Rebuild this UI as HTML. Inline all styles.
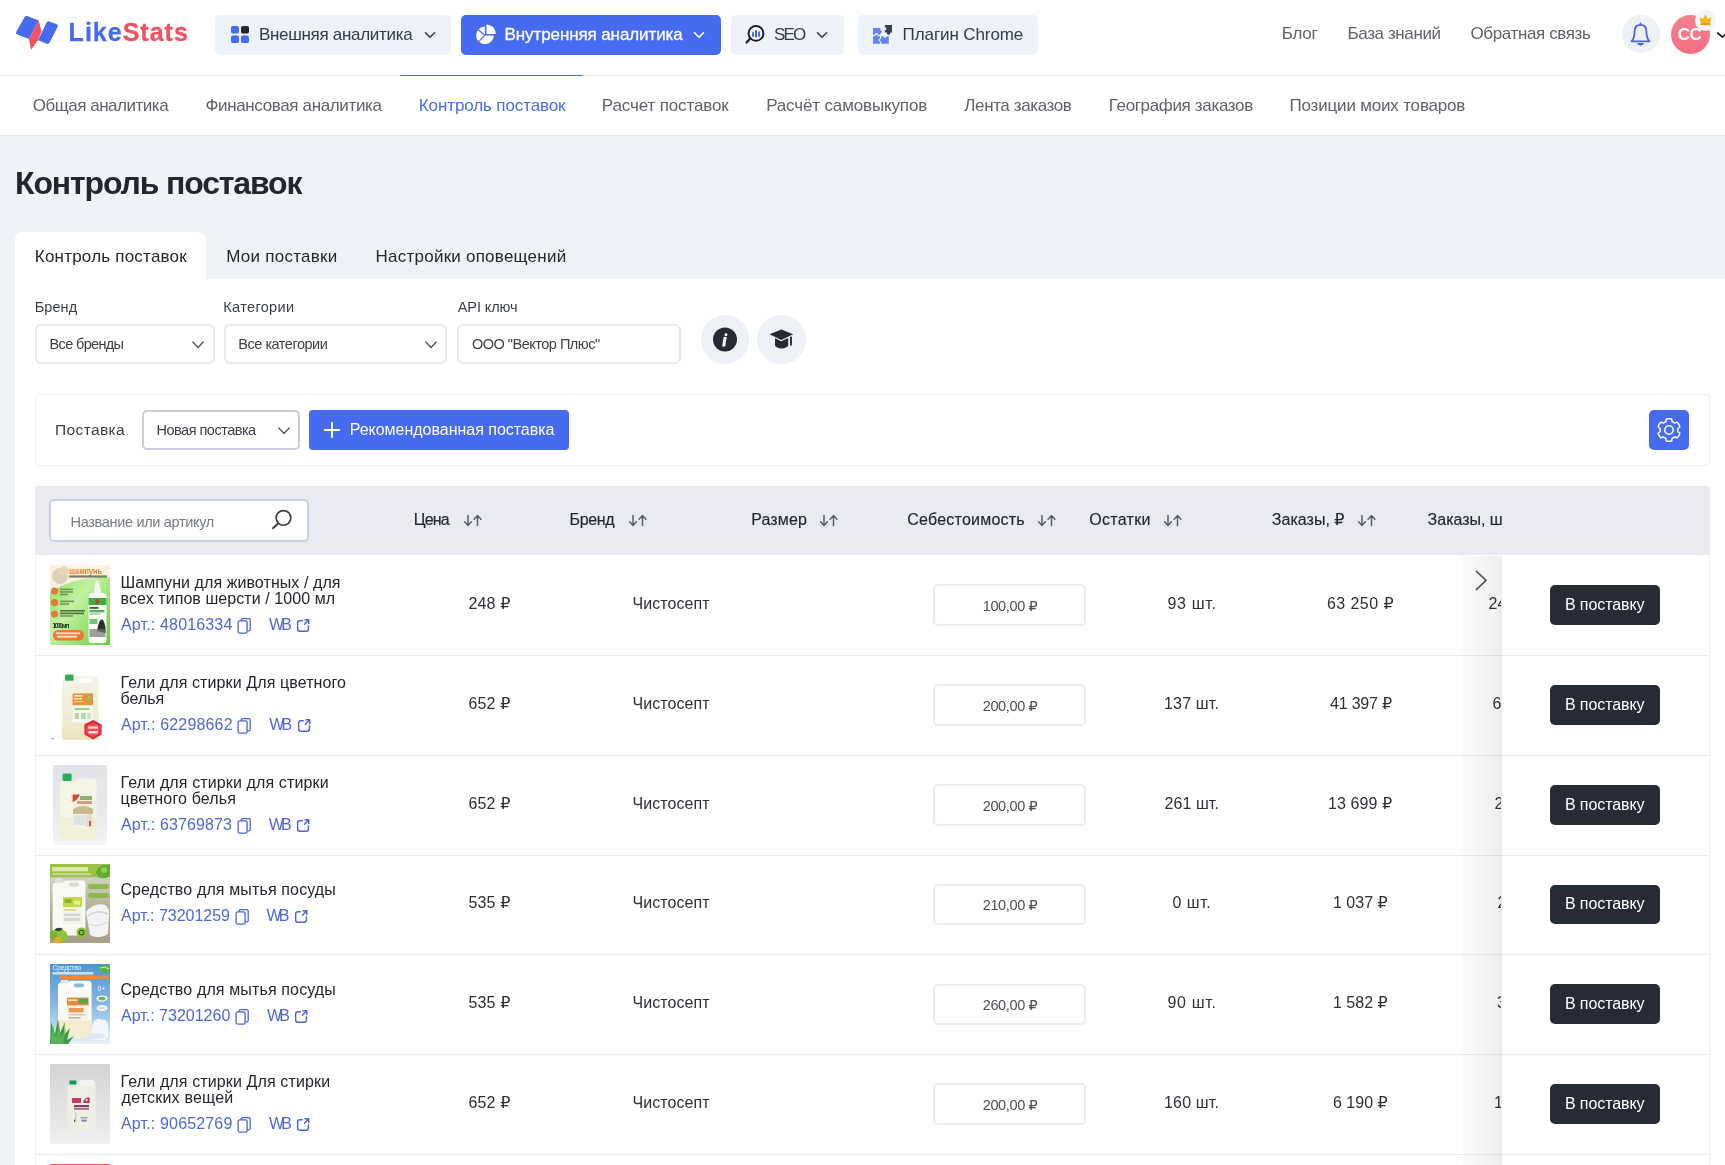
<!DOCTYPE html>
<html lang="ru">
<head>
<meta charset="utf-8">
<title>Контроль поставок — LikeStats</title>
<style>
*{box-sizing:border-box;margin:0;padding:0}
html,body{width:1725px;height:1165px;overflow:hidden}
body{position:relative;background:#f0f3f6;font-family:"Liberation Sans","DejaVu Sans",sans-serif;color:#23262f;font-size:16px}
.abs{position:absolute;white-space:nowrap}
/* header */
#hdr{position:absolute;left:0;top:0;width:1725px;height:76px;background:#fff;border-bottom:1px solid #e3e6eb}
.logo-t{left:69px;top:16px;font-size:27px;font-weight:700;line-height:34px;letter-spacing:0.2px}
.logo-t .a{color:#476bf0}.logo-t .b{color:#ef4f5f}
.nbtn{position:absolute;top:15px;height:40px;border-radius:5px;background:#eef2f9;color:#343a46;font-size:16px;line-height:40px;white-space:nowrap}
.nbtn.act{background:#476bf0;color:#fff}
.nbtn span{position:absolute;top:-1px}
.nbtn svg{position:absolute}
.hl{top:24px;font-size:16px;line-height:20px;color:#5c6068}
/* subnav */
#sub{position:absolute;left:0;top:76px;width:1725px;height:60px;background:#fff;border-bottom:1px solid #e3e6eb}
.sl{top:95px;font-size:16px;line-height:20px;color:#5c6068}
.sl.act{color:#476bf0}
#ind{position:absolute;left:400px;top:75px;width:183px;height:1px;background:#476bf0}
h1{position:absolute;left:15px;top:164px;font-size:30px;line-height:38px;font-weight:700;color:#23262f;white-space:nowrap;letter-spacing:0.2px}
/* tabs */
#tab1{position:absolute;left:15px;top:232px;width:191px;height:48px;background:#fff;border-radius:8px 8px 0 0}
.tb{top:246px;font-size:16px;line-height:20px;color:#23262f}
#panel{position:absolute;left:15px;top:279px;width:1710px;height:900px;background:#fff}
.lbl{top:298px;font-size:14px;line-height:18px;color:#3b3f49}
.sel{position:absolute;top:324px;height:40px;border:2px solid #e9e9ec;border-radius:6px;background:#fff}
.circ{position:absolute;top:315.2px;width:48.4px;height:48.4px;border-radius:50%;background:#eef1f6}
#sbar{position:absolute;left:35px;top:394px;width:1675px;height:72px;border:1px solid #eff0f2;border-radius:4px;background:#fff}
/* table */
#thead{position:absolute;left:35px;top:486px;width:1675px;height:70px;background:#e9ebf0;border-radius:4px 4px 0 0}
.th{top:510px;font-size:15px;line-height:20px;color:#23262f}
#tbody{position:absolute;left:35px;top:555px;width:1675px;height:620px;border-left:1px solid #eff0f2;border-right:1px solid #eff0f2;background:#fff}
.row{position:absolute;left:36px;width:1673px;height:100px;border-bottom:1px solid #eceef1}
.c{position:absolute;white-space:nowrap;font-size:15px;line-height:20px;color:#2f333c}
.ttl{position:absolute;left:85px;font-size:15px;line-height:16px;color:#23262f;white-space:nowrap}
.art{position:absolute;left:85px;font-size:15px;line-height:20px;color:#4a68d8;white-space:nowrap}
.inp{position:absolute;left:897px;width:153px;height:42px;border:2px solid #ececee;border-radius:4px;font-size:14px;line-height:38px;color:#3b3f49;text-align:center;background:#fff}
.btn{position:absolute;left:1514px;width:110px;height:40px;border-radius:4px;background:#23262f;color:#fff;font-size:16px;line-height:38px;text-align:center}
.thumb{position:absolute;left:14px;width:60px;height:80px;overflow:hidden}
</style>
</head>
<body>
<!-- HEADER -->
<div id="hdr"></div>
<svg class="abs" style="left:12px;top:12px" width="52" height="42" viewBox="12 12 52 42">
  <path d="M24.4 17.2 Q25.3 15.5 27.1 16.1 L38.8 20.4 L28.9 39 L17.2 34.6 Q15.3 33.8 16.2 32 Z" fill="#476bf0"/>
  <path d="M38.8 20.4 L41.4 31.6 L38 40.2 L31 49.8 L28.9 39 Z" fill="#ef5261"/>
  <path d="M46.6 22.6 Q47.5 20.9 49.3 21.5 L56.8 24.2 Q58.6 25 57.7 26.8 L49.5 42.8 Q48.6 44.4 46.8 43.8 L38 40.3 Z" fill="#476bf0"/>
</svg>
<!-- nav buttons -->
<div class="nbtn" style="left:215px;width:236px"></div>
<div class="nbtn act" style="left:461px;width:260px"></div>
<div class="nbtn" style="left:731px;width:113px"></div>
<div class="nbtn" style="left:858px;width:180px"></div>
<svg class="abs" style="left:231px;top:26px" width="18" height="17" viewBox="0 0 18 17">
  <rect x="0" y="0" width="8" height="7.6" rx="1.8" fill="#476bf0"/>
  <rect x="10" y="0" width="8" height="7.6" rx="1.8" fill="#23262f"/>
  <rect x="0" y="9.4" width="8" height="7.6" rx="1.8" fill="#476bf0"/>
  <rect x="10" y="9.4" width="8" height="7.6" rx="1.8" fill="#476bf0"/>
</svg>
<svg class="abs" style="left:424px;top:31px" width="12" height="8" viewBox="0 0 12 8"><path d="M1.5 1.8 L6 6.2 L10.5 1.8" fill="none" stroke="#343a46" stroke-width="1.6" stroke-linecap="round" stroke-linejoin="round"/></svg>
<!-- pie icon -->
<svg class="abs" style="left:474px;top:23px" width="24" height="24" viewBox="474 23 24 24">
  <path d="M484.9 26.6 A8.8 8.8 0 1 0 493.7 35.4 L484.9 35.4 Z" fill="#fff"/>
  <path d="M486.5 24.6 A9.4 9.4 0 0 1 495.9 34 L486.5 34 Z" fill="#fff"/>
  <path d="M484.9 35.4 L478.4 29.8 M484.9 35.4 L478.8 41.4" stroke="#476bf0" stroke-width="1.3" fill="none"/>
</svg>
<svg class="abs" style="left:693px;top:31px" width="12" height="8" viewBox="0 0 12 8"><path d="M1.5 1.8 L6 6.2 L10.5 1.8" fill="none" stroke="#fff" stroke-width="1.6" stroke-linecap="round" stroke-linejoin="round"/></svg>
<!-- seo icon -->
<svg class="abs" style="left:744px;top:23px" width="24" height="24" viewBox="744 23 24 24">
  <circle cx="756" cy="33.4" r="7.4" fill="#f6f9fd" stroke="#1d2029" stroke-width="2"/>
  <path d="M750.2 38.6 L746.6 42.6" stroke="#1d2029" stroke-width="2.2" stroke-linecap="round"/>
  <path d="M753 32.2 V36.8 M759.1 31.4 V36.8" stroke="#4f63ea" stroke-width="1.9" fill="none"/>
  <path d="M756.05 30.2 V37.3" stroke="#3f58c8" stroke-width="1.9" fill="none"/>
</svg>
<svg class="abs" style="left:816px;top:31px" width="12" height="8" viewBox="0 0 12 8"><path d="M1.5 1.8 L6 6.2 L10.5 1.8" fill="none" stroke="#343a46" stroke-width="1.6" stroke-linecap="round" stroke-linejoin="round"/></svg>
<!-- puzzle icon -->
<svg class="abs" style="left:871px;top:23px" width="24" height="24" viewBox="871 23 24 24">
  <path d="M873 28 H880.4 V30.3 A1.5 1.5 0 1 1 880.4 33.3 V34.7 H878.2 A1.7 1.7 0 0 0 874.8 34.7 H873 Z" fill="#6683f3"/>
  <path d="M873 36.2 H875 A1.7 1.7 0 0 1 878.2 36.2 H880 V38.6 A1.5 1.5 0 0 0 880 41.6 V43.8 H873 Z" fill="#6683f3"/>
  <path d="M881.3 36.3 H883.6 A1.5 1.5 0 0 0 886.6 36.3 H888.8 V43.8 H881.3 V41.6 A1.5 1.5 0 1 1 881.3 38.6 Z" fill="#6683f3"/>
  <path d="M884.8 25 H892 V32.6 H890.2 A1.7 1.7 0 1 1 887 32.6 H884.8 V30.4 A1.6 1.6 0 1 0 884.8 27.2 Z" fill="#3a3d4b"/>
</svg>
<!-- bell -->
<div class="abs" style="left:1621.5px;top:15px;width:38px;height:38.4px;border-radius:50%;background:#eef1f6"></div>
<svg class="abs" style="left:1628px;top:21px" width="26" height="28" viewBox="1628 21 26 28">
  <path d="M1640.5 24.9 C1636.4 24.9 1634.6 27.8 1634.6 31.4 C1634.6 36.4 1633.4 39 1631.6 41.4 H1649.4 C1647.6 39 1646.4 36.4 1646.4 31.4 C1646.4 27.8 1644.6 24.9 1640.5 24.9 Z" fill="none" stroke="#4a64e4" stroke-width="1.8" stroke-linejoin="round"/>
  <path d="M1640.5 23.4 V25" stroke="#4a64e4" stroke-width="1.8" stroke-linecap="round"/>
  <path d="M1636.8 43 H1644.2 Q1640.5 48.6 1636.8 43 Z" fill="#4a64e4"/>
</svg>
<!-- avatar -->
<div class="abs" style="left:1671px;top:14.8px;width:39px;height:39px;border-radius:50%;background:linear-gradient(180deg,#f97f8f,#f37081)"></div>
<div class="abs" style="left:1694.7px;top:9.6px;width:21px;height:21px;border-radius:50%;background:#f6f4f6"></div>
<svg class="abs" style="left:1699px;top:13px" width="14" height="14" viewBox="1699 13 14 14">
  <path d="M1700.6 22 L1700 17 L1703 19.2 L1705.5 14.2 L1708 19.2 L1711 17 L1710.4 22 Z" fill="#f5b70a"/>
  <rect x="1700.6" y="22.4" width="9.8" height="2.6" fill="#e39a12"/>
</svg>
<svg class="abs" style="left:1715px;top:30px" width="12" height="10" viewBox="1715 30 12 10"><path d="M1717.6 33 L1722.4 37 L1727.2 33" fill="none" stroke="#23262f" stroke-width="1.7" stroke-linecap="round" stroke-linejoin="round"/></svg>
<!-- SUBNAV -->
<div id="sub"></div>
<div id="ind"></div>
<!-- TABS + PANEL -->
<div id="tab1"></div>
<div id="panel"></div>
<!-- filters -->
<div class="sel" style="left:35.2px;width:179.6px"></div>
<div class="sel" style="left:224.2px;width:223.3px"></div>
<div class="sel" style="left:457.4px;width:223.2px"></div>
<svg class="abs" style="left:191.4px;top:339.8px" width="14" height="10" viewBox="0 0 14 10"><path d="M1.8 2 L7 7.4 L12.2 2" fill="none" stroke="#575a63" stroke-width="1.4" stroke-linecap="round" stroke-linejoin="round"/></svg>
<svg class="abs" style="left:424.4px;top:339.8px" width="14" height="10" viewBox="0 0 14 10"><path d="M1.8 2 L7 7.4 L12.2 2" fill="none" stroke="#575a63" stroke-width="1.4" stroke-linecap="round" stroke-linejoin="round"/></svg>
<div class="circ" style="left:700.5px"></div>
<div class="circ" style="left:757.4px"></div>
<!-- info icon -->
<svg class="abs" style="left:711px;top:325px" width="28" height="28" viewBox="711 325 28 28">
  <circle cx="725" cy="339.4" r="12" fill="#262a35"/>
  <circle cx="726" cy="334.8" r="1.45" fill="#fff"/>
  <path d="M723.7 337 H726.7 L725.2 346.4 H722.1 Z" fill="#fff"/>
</svg>
<!-- grad cap -->
<svg class="abs" style="left:767px;top:326px" width="30" height="26" viewBox="767 326 30 26">
  <path d="M781.3 329.4 L793.2 334.3 L781.3 339.9 L769.6 334.3 Z" fill="#262a35"/>
  <path d="M775 338.2 L781.3 341.3 L788.2 338 V345 Q788.2 346.4 786.8 347 Q781.6 350 776.4 347 Q775 346.4 775 345 Z" fill="#262a35"/>
  <rect x="790" y="336.4" width="1.9" height="9.2" rx="0.6" fill="#262a35"/>
</svg>
<!-- supply bar -->
<div id="sbar"></div>
<div class="abs" style="left:142px;top:410px;width:158px;height:40px;border:2px solid #c9cddd;border-radius:5px;background:#fff"></div>
<svg class="abs" style="left:277.2px;top:425.8px" width="14" height="10" viewBox="0 0 14 10"><path d="M1.8 2 L7 7.4 L12.2 2" fill="none" stroke="#575a63" stroke-width="1.4" stroke-linecap="round" stroke-linejoin="round"/></svg>
<div class="abs" style="left:309px;top:410px;width:260px;height:40px;border-radius:4px;background:#476bf0"></div>
<svg class="abs" style="left:323.8px;top:421.9px" width="16" height="16" viewBox="0 0 16 16"><path d="M8 0.9 V15.1 M0.9 8 H15.1" stroke="#fff" stroke-width="1.9" stroke-linecap="round"/></svg>
<div class="abs" style="left:1649px;top:410px;width:40px;height:40px;border-radius:5px;background:#476bf0"></div>
<svg class="abs" style="left:1656.1px;top:417px" width="26" height="26" viewBox="-13 -13 26 26">
  <g fill="none" stroke="#fff" stroke-width="1.5" stroke-linejoin="round">
  <circle r="4.2"/>
  <path d="M0.00 11.30 L-0.20 11.30 L-0.39 11.29 L-0.59 11.28 L-0.79 11.27 L-0.98 11.26 L-1.18 11.24 L-1.38 11.22 L-1.57 11.19 L-1.77 11.16 L-1.96 11.13 L-2.16 11.09 L-2.35 11.05 L-2.54 10.99 L-2.69 10.77 L-2.80 10.43 L-2.87 10.01 L-2.92 9.56 L-2.96 9.12 L-3.01 8.73 L-3.08 8.45 L-3.19 8.31 L-3.33 8.25 L-3.48 8.19 L-3.62 8.13 L-3.76 8.07 L-3.90 8.00 L-4.04 7.93 L-4.18 7.86 L-4.31 7.78 L-4.45 7.71 L-4.58 7.63 L-4.72 7.55 L-4.85 7.46 L-4.98 7.38 L-5.10 7.29 L-5.23 7.20 L-5.36 7.11 L-5.48 7.01 L-5.60 6.92 L-5.78 6.89 L-6.06 6.97 L-6.41 7.12 L-6.82 7.31 L-7.23 7.49 L-7.64 7.64 L-7.99 7.71 L-8.25 7.69 L-8.40 7.56 L-8.53 7.41 L-8.66 7.26 L-8.78 7.11 L-8.90 6.96 L-9.02 6.80 L-9.14 6.64 L-9.26 6.48 L-9.37 6.32 L-9.48 6.15 L-9.58 5.99 L-9.69 5.82 L-9.79 5.65 L-9.88 5.48 L-9.98 5.31 L-10.07 5.13 L-10.16 4.95 L-10.24 4.78 L-10.32 4.60 L-10.40 4.42 L-10.48 4.23 L-10.55 4.05 L-10.62 3.86 L-10.68 3.68 L-10.75 3.49 L-10.78 3.30 L-10.67 3.06 L-10.43 2.80 L-10.10 2.52 L-9.74 2.25 L-9.38 1.99 L-9.07 1.76 L-8.86 1.56 L-8.79 1.39 L-8.81 1.24 L-8.83 1.08 L-8.85 0.93 L-8.87 0.78 L-8.88 0.62 L-8.89 0.47 L-8.89 0.31 L-8.90 0.16 L-8.90 0.00 L-8.90 -0.16 L-8.89 -0.31 L-8.89 -0.47 L-8.88 -0.62 L-8.87 -0.78 L-8.85 -0.93 L-8.83 -1.08 L-8.81 -1.24 L-8.79 -1.39 L-8.86 -1.56 L-9.07 -1.76 L-9.38 -1.99 L-9.74 -2.25 L-10.10 -2.52 L-10.43 -2.80 L-10.67 -3.06 L-10.78 -3.30 L-10.75 -3.49 L-10.68 -3.68 L-10.62 -3.86 L-10.55 -4.05 L-10.48 -4.23 L-10.40 -4.42 L-10.32 -4.60 L-10.24 -4.78 L-10.16 -4.95 L-10.07 -5.13 L-9.98 -5.31 L-9.88 -5.48 L-9.79 -5.65 L-9.69 -5.82 L-9.58 -5.99 L-9.48 -6.15 L-9.37 -6.32 L-9.26 -6.48 L-9.14 -6.64 L-9.02 -6.80 L-8.90 -6.96 L-8.78 -7.11 L-8.66 -7.26 L-8.53 -7.41 L-8.40 -7.56 L-8.25 -7.69 L-7.99 -7.71 L-7.64 -7.64 L-7.23 -7.49 L-6.82 -7.31 L-6.41 -7.12 L-6.06 -6.97 L-5.78 -6.89 L-5.60 -6.92 L-5.48 -7.01 L-5.36 -7.11 L-5.23 -7.20 L-5.10 -7.29 L-4.98 -7.38 L-4.85 -7.46 L-4.72 -7.55 L-4.58 -7.63 L-4.45 -7.71 L-4.31 -7.78 L-4.18 -7.86 L-4.04 -7.93 L-3.90 -8.00 L-3.76 -8.07 L-3.62 -8.13 L-3.48 -8.19 L-3.33 -8.25 L-3.19 -8.31 L-3.08 -8.45 L-3.01 -8.73 L-2.96 -9.12 L-2.92 -9.56 L-2.87 -10.01 L-2.80 -10.43 L-2.69 -10.77 L-2.54 -10.99 L-2.35 -11.05 L-2.16 -11.09 L-1.96 -11.13 L-1.77 -11.16 L-1.57 -11.19 L-1.38 -11.22 L-1.18 -11.24 L-0.98 -11.26 L-0.79 -11.27 L-0.59 -11.28 L-0.39 -11.29 L-0.20 -11.30 L-0.00 -11.30 L0.20 -11.30 L0.39 -11.29 L0.59 -11.28 L0.79 -11.27 L0.98 -11.26 L1.18 -11.24 L1.38 -11.22 L1.57 -11.19 L1.77 -11.16 L1.96 -11.13 L2.16 -11.09 L2.35 -11.05 L2.54 -10.99 L2.69 -10.77 L2.80 -10.43 L2.87 -10.01 L2.92 -9.56 L2.96 -9.12 L3.01 -8.73 L3.08 -8.45 L3.19 -8.31 L3.33 -8.25 L3.48 -8.19 L3.62 -8.13 L3.76 -8.07 L3.90 -8.00 L4.04 -7.93 L4.18 -7.86 L4.31 -7.78 L4.45 -7.71 L4.58 -7.63 L4.72 -7.55 L4.85 -7.46 L4.98 -7.38 L5.10 -7.29 L5.23 -7.20 L5.36 -7.11 L5.48 -7.01 L5.60 -6.92 L5.78 -6.89 L6.06 -6.97 L6.41 -7.12 L6.82 -7.31 L7.23 -7.49 L7.64 -7.64 L7.99 -7.71 L8.25 -7.69 L8.40 -7.56 L8.53 -7.41 L8.66 -7.26 L8.78 -7.11 L8.90 -6.96 L9.02 -6.80 L9.14 -6.64 L9.26 -6.48 L9.37 -6.32 L9.48 -6.15 L9.58 -5.99 L9.69 -5.82 L9.79 -5.65 L9.88 -5.48 L9.98 -5.31 L10.07 -5.13 L10.16 -4.95 L10.24 -4.78 L10.32 -4.60 L10.40 -4.42 L10.48 -4.23 L10.55 -4.05 L10.62 -3.86 L10.68 -3.68 L10.75 -3.49 L10.78 -3.30 L10.67 -3.06 L10.43 -2.80 L10.10 -2.52 L9.74 -2.25 L9.38 -1.99 L9.07 -1.76 L8.86 -1.56 L8.79 -1.39 L8.81 -1.24 L8.83 -1.08 L8.85 -0.93 L8.87 -0.78 L8.88 -0.62 L8.89 -0.47 L8.89 -0.31 L8.90 -0.16 L8.90 -0.00 L8.90 0.16 L8.89 0.31 L8.89 0.47 L8.88 0.62 L8.87 0.78 L8.85 0.93 L8.83 1.08 L8.81 1.24 L8.79 1.39 L8.86 1.56 L9.07 1.76 L9.38 1.99 L9.74 2.25 L10.10 2.52 L10.43 2.80 L10.67 3.06 L10.78 3.30 L10.75 3.49 L10.68 3.68 L10.62 3.86 L10.55 4.05 L10.48 4.23 L10.40 4.42 L10.32 4.60 L10.24 4.78 L10.16 4.95 L10.07 5.13 L9.98 5.31 L9.88 5.48 L9.79 5.65 L9.69 5.82 L9.58 5.99 L9.48 6.15 L9.37 6.32 L9.26 6.48 L9.14 6.64 L9.02 6.80 L8.90 6.96 L8.78 7.11 L8.66 7.26 L8.53 7.41 L8.40 7.56 L8.25 7.69 L7.99 7.71 L7.64 7.64 L7.23 7.49 L6.82 7.31 L6.41 7.12 L6.06 6.97 L5.78 6.89 L5.60 6.92 L5.48 7.01 L5.36 7.11 L5.23 7.20 L5.10 7.29 L4.98 7.38 L4.85 7.46 L4.72 7.55 L4.58 7.63 L4.45 7.71 L4.31 7.78 L4.18 7.86 L4.04 7.93 L3.90 8.00 L3.76 8.07 L3.62 8.13 L3.48 8.19 L3.33 8.25 L3.19 8.31 L3.08 8.45 L3.01 8.73 L2.96 9.12 L2.92 9.56 L2.87 10.01 L2.80 10.43 L2.69 10.77 L2.54 10.99 L2.35 11.05 L2.16 11.09 L1.96 11.13 L1.77 11.16 L1.57 11.19 L1.38 11.22 L1.18 11.24 L0.98 11.26 L0.79 11.27 L0.59 11.28 L0.39 11.29 L0.20 11.30 Z"/>
  </g>
</svg>
<!-- table head -->
<div id="thead"></div>
<div class="abs" style="left:49.3px;top:499px;width:259.6px;height:42.8px;border:2px solid #cbd0e0;border-radius:5px;background:#fff"></div>
<svg class="abs" style="left:270px;top:508px" width="24" height="24" viewBox="0 0 24 24">
  <circle cx="13.5" cy="9.9" r="7.35" fill="none" stroke="#3d4047" stroke-width="1.7"/>
  <path d="M8.3 15.2 L3 20.2" stroke="#3d4047" stroke-width="1.9" stroke-linecap="round"/>
</svg>
<div id="tbody"></div>

<!-- ROWS -->
<div class="abs" style="left:36px;top:655px;width:1673px;height:1px;background:#ececee"></div>
<div class="abs" style="left:36px;top:755px;width:1673px;height:1px;background:#ececee"></div>
<div class="abs" style="left:36px;top:855px;width:1673px;height:1px;background:#ececee"></div>
<div class="abs" style="left:36px;top:954px;width:1673px;height:1px;background:#ececee"></div>
<div class="abs" style="left:36px;top:1054px;width:1673px;height:1px;background:#ececee"></div>
<div class="abs" style="left:36px;top:1154px;width:1673px;height:1px;background:#ececee"></div>
<svg class="abs" style="left:463.1px;top:513px" width="22" height="15" viewBox="0 0 22 15"><g fill="none" stroke="#5a5e69" stroke-width="1.5" stroke-linecap="round" stroke-linejoin="round"><path d="M5 2.6 V12.2 M1.6 8.8 L5 12.4 L8.4 8.8"/><path d="M14.5 12.4 V2.8 M11.1 6.2 L14.5 2.6 L17.9 6.2"/></g></svg>
<svg class="abs" style="left:628.0px;top:513px" width="22" height="15" viewBox="0 0 22 15"><g fill="none" stroke="#5a5e69" stroke-width="1.5" stroke-linecap="round" stroke-linejoin="round"><path d="M5 2.6 V12.2 M1.6 8.8 L5 12.4 L8.4 8.8"/><path d="M14.5 12.4 V2.8 M11.1 6.2 L14.5 2.6 L17.9 6.2"/></g></svg>
<svg class="abs" style="left:819.0px;top:513px" width="22" height="15" viewBox="0 0 22 15"><g fill="none" stroke="#5a5e69" stroke-width="1.5" stroke-linecap="round" stroke-linejoin="round"><path d="M5 2.6 V12.2 M1.6 8.8 L5 12.4 L8.4 8.8"/><path d="M14.5 12.4 V2.8 M11.1 6.2 L14.5 2.6 L17.9 6.2"/></g></svg>
<svg class="abs" style="left:1037.0px;top:513px" width="22" height="15" viewBox="0 0 22 15"><g fill="none" stroke="#5a5e69" stroke-width="1.5" stroke-linecap="round" stroke-linejoin="round"><path d="M5 2.6 V12.2 M1.6 8.8 L5 12.4 L8.4 8.8"/><path d="M14.5 12.4 V2.8 M11.1 6.2 L14.5 2.6 L17.9 6.2"/></g></svg>
<svg class="abs" style="left:1163.0px;top:513px" width="22" height="15" viewBox="0 0 22 15"><g fill="none" stroke="#5a5e69" stroke-width="1.5" stroke-linecap="round" stroke-linejoin="round"><path d="M5 2.6 V12.2 M1.6 8.8 L5 12.4 L8.4 8.8"/><path d="M14.5 12.4 V2.8 M11.1 6.2 L14.5 2.6 L17.9 6.2"/></g></svg>
<svg class="abs" style="left:1357.0px;top:513px" width="22" height="15" viewBox="0 0 22 15"><g fill="none" stroke="#5a5e69" stroke-width="1.5" stroke-linecap="round" stroke-linejoin="round"><path d="M5 2.6 V12.2 M1.6 8.8 L5 12.4 L8.4 8.8"/><path d="M14.5 12.4 V2.8 M11.1 6.2 L14.5 2.6 L17.9 6.2"/></g></svg>
<svg class="abs" style="left:50px;top:565px" width="60" height="80" viewBox="0 0 60 80">
<defs><linearGradient id="g1" x1="0" y1="0" x2="1" y2="1"><stop offset="0" stop-color="#86d957"/><stop offset="0.45" stop-color="#c2f2a0"/><stop offset="1" stop-color="#68cb40"/></linearGradient></defs>
<rect width="60" height="80" fill="url(#g1)"/>
<path d="M0 0 H60 V12 Q40 12 22 17 Q8 21 0 28 Z" fill="#fbf3e2"/>
<ellipse cx="10" cy="11" rx="8" ry="8" fill="#d9c9b4" opacity="0.85"/><ellipse cx="14" cy="6" rx="5" ry="4.5" fill="#e9d7b5"/>
<text x="19" y="8.6" font-family="Liberation Sans,sans-serif" font-size="8.6" font-weight="700" fill="#e8862e" textLength="33" lengthAdjust="spacingAndGlyphs">шампунь</text>
<rect x="19" y="10.4" width="38" height="2.2" fill="#3d4a35" opacity="0.7"/>
<rect x="38.5" y="28" width="18" height="50" rx="3.5" fill="#fbfcfa"/><path d="M44 28 Q44.5 16 47 15 Q49.6 16 51 28 Z" fill="#f4f6f2"/>
<rect x="38.5" y="33" width="18" height="7" fill="#3fae45"/><rect x="45.6" y="34.4" width="3.4" height="4" fill="#c0392b"/>
<rect x="39.5" y="42" width="9" height="1.8" fill="#2f5a35"/><rect x="39.5" y="45" width="15" height="2.4" fill="#56b25a"/><rect x="39.5" y="48.4" width="11" height="1.2" fill="#8fbf92"/>
<rect x="39.5" y="54" width="8" height="5" fill="#56b25a" opacity="0.8"/><path d="M47 66 Q49 52 53 55 Q56 60 55.6 68 Z" fill="#2d302c"/><rect x="39.5" y="64" width="16" height="8" fill="#6f7a6d" opacity="0.7"/>
<circle cx="4.6" cy="26" r="3.6" fill="#e67a35"/><circle cx="4.6" cy="37.6" r="3.6" fill="#e67a35"/><circle cx="4.6" cy="49" r="3.6" fill="#e67a35"/>
<rect x="10" y="23.6" width="13" height="1.5" fill="#476b3a" opacity="0.7"/><rect x="10" y="26.2" width="13" height="1.5" fill="#476b3a" opacity="0.7"/><rect x="10" y="28.8" width="8" height="1.5" fill="#476b3a" opacity="0.7"/>
<rect x="10" y="35.6" width="14" height="1.5" fill="#476b3a" opacity="0.7"/><rect x="10" y="38.2" width="9" height="1.5" fill="#476b3a" opacity="0.7"/>
<rect x="10" y="45" width="25" height="1.6" fill="#33502b" opacity="0.8"/><rect x="10" y="47.6" width="24" height="1.6" fill="#33502b" opacity="0.8"/><rect x="10" y="50.2" width="13" height="1.5" fill="#476b3a" opacity="0.7"/>
<text x="2.4" y="62.6" font-family="Liberation Sans,sans-serif" font-size="6.6" font-weight="700" fill="#20301c" textLength="17">1000мл</text>
<rect x="3" y="65" width="31" height="10.6" rx="5" fill="#ec7a32"/><rect x="6" y="67.4" width="24" height="1.8" fill="#fbe3cf"/><rect x="7" y="70.8" width="20" height="1.8" fill="#fbe3cf"/>
</svg>
<svg class="abs" style="left:236.9px;top:616.8px" width="16" height="18" viewBox="0 0 16 18"><g fill="none" stroke="#4f63d8" stroke-width="1.3" stroke-linejoin="round"><rect x="1.1" y="3.9" width="9" height="12.2" rx="1.6"/><path d="M4.2 3.7 V3.2 Q4.2 1.7 5.7 1.7 H11.7 Q13.2 1.7 13.2 3.2 V12.4 Q13.2 13.9 11.9 13.9 H10.3"/></g></svg>
<svg class="abs" style="left:296.3px;top:618.2px" width="16" height="16" viewBox="0 0 16.6 16.6"><g fill="none" stroke="#4f63d8" stroke-width="1.5" stroke-linecap="round" stroke-linejoin="round"><path d="M6.6 2.9 H4 Q1.7 2.9 1.7 5.2 V11.4 Q1.7 13.7 4 13.7 H10.6 Q12.9 13.7 12.9 11.4 V8.2"/><path d="M9.4 1.9 H13.2 V5.7 M13 2.1 L8.8 6.4"/></g></svg>
<div class="abs" style="left:933.2px;top:584.2px;width:152.6px;height:41.4px;border:2px solid #ececee;border-radius:5px;background:#fff"></div>
<div class="abs" style="left:1550px;top:585px;width:110px;height:40px;border-radius:5px;background:#272b36"></div>
<svg class="abs" style="left:50px;top:665px" width="60" height="80" viewBox="0 0 60 80">
<rect width="60" height="80" fill="#fff"/>
<defs><linearGradient id="g2" x1="0" y1="0" x2="0" y2="1"><stop offset="0" stop-color="#f4f3e8"/><stop offset="0.6" stop-color="#f1ecd6"/><stop offset="1" stop-color="#ede3bf"/></linearGradient></defs>
<path d="M12 17 Q12 14 15 14 H24 L27 11.6 H45 Q48.6 11.6 48.6 15 V72 Q48.6 75 45.6 75 H15 Q12 75 12 72 Z" fill="url(#g2)"/>
<rect x="28" y="13" width="14" height="5" rx="2" fill="#fff" opacity="0.85"/>
<rect x="15" y="9.4" width="8.6" height="6.4" rx="1.2" fill="#2fb24e"/>
<rect x="22.6" y="28.4" width="20.4" height="12" fill="#ea8f3a"/><rect x="24" y="30" width="9" height="1.6" fill="#fbe6b8"/><rect x="24" y="33" width="8" height="1.6" fill="#fbe6b8"/><rect x="24" y="36" width="10" height="1.4" fill="#f3c27e"/><circle cx="39" cy="33.6" r="2.4" fill="#8dc26a"/>
<rect x="22.6" y="40.4" width="20.4" height="17" fill="#f8f9f3"/><rect x="24.6" y="43" width="15" height="2" fill="#9ccf8a"/><rect x="24.6" y="48" width="4.6" height="6" fill="#b5d9a6"/><rect x="31" y="48" width="4.6" height="6" fill="#b5d9a6"/><rect x="37" y="48" width="4" height="6" fill="#cfe5c6"/>
<path d="M43 55 L51.6 59.6 V69.6 L43 74.6 L34.4 69.6 V59.6 Z" fill="#e2283a"/><path d="M43 57.4 L49.6 61 V68.4 L43 72.2 L36.4 68.4 V61 Z" fill="#ef4a57"/>
<rect x="38" y="61.4" width="10" height="2.2" fill="#fbd6da"/><rect x="38.6" y="66" width="9" height="2.4" fill="#fbe9ea"/>
<rect x="1.6" y="73.2" width="2" height="1" fill="#777"/>
</svg>
<svg class="abs" style="left:237.2px;top:716.8px" width="16" height="18" viewBox="0 0 16 18"><g fill="none" stroke="#4f63d8" stroke-width="1.3" stroke-linejoin="round"><rect x="1.1" y="3.9" width="9" height="12.2" rx="1.6"/><path d="M4.2 3.7 V3.2 Q4.2 1.7 5.7 1.7 H11.7 Q13.2 1.7 13.2 3.2 V12.4 Q13.2 13.9 11.9 13.9 H10.3"/></g></svg>
<svg class="abs" style="left:296.6px;top:718.2px" width="16" height="16" viewBox="0 0 16.6 16.6"><g fill="none" stroke="#4f63d8" stroke-width="1.5" stroke-linecap="round" stroke-linejoin="round"><path d="M6.6 2.9 H4 Q1.7 2.9 1.7 5.2 V11.4 Q1.7 13.7 4 13.7 H10.6 Q12.9 13.7 12.9 11.4 V8.2"/><path d="M9.4 1.9 H13.2 V5.7 M13 2.1 L8.8 6.4"/></g></svg>
<div class="abs" style="left:933.2px;top:684.2px;width:152.6px;height:41.4px;border:2px solid #ececee;border-radius:5px;background:#fff"></div>
<div class="abs" style="left:1550px;top:685px;width:110px;height:40px;border-radius:5px;background:#272b36"></div>
<svg class="abs" style="left:53px;top:765px" width="54" height="80" viewBox="0 0 54 80">
<defs><linearGradient id="g3" x1="0" y1="0" x2="0" y2="1"><stop offset="0" stop-color="#e2e3e8"/><stop offset="0.75" stop-color="#ececf0"/><stop offset="1" stop-color="#f4f4f6"/></linearGradient></defs>
<rect width="54" height="80" fill="url(#g3)"/>
<path d="M7 20 Q7 16.4 10.6 16.4 H22 L25 13.6 H40 Q43.6 13.6 43.6 17.4 V71 Q43.6 74.6 40 74.6 H10.6 Q7 74.6 7 71 Z" fill="#f5f5e6"/>
<path d="M7 52 H43.6 V71 Q43.6 74.6 40 74.6 H10.6 Q7 74.6 7 71 Z" fill="#f1efd4"/>
<rect x="9.6" y="8.6" width="9" height="7.4" rx="1.4" fill="#24ab57"/>
<rect x="19.6" y="29.6" width="20.4" height="34" fill="#f3f1e6"/>
<path d="M19.6 29.6 H27 Q24 36 19.6 37 Z" fill="#d8443a"/><rect x="27" y="31" width="12" height="4" fill="#8db36a"/><rect x="24" y="36" width="15" height="3" fill="#d8a07a"/><path d="M20 44 Q30 38 40 44 V49 H20 Z" fill="#c9b98a"/><rect x="20.6" y="50" width="12" height="10" fill="#dfe2e2"/><path d="M33 49 Q38 47 39.6 54 V62 H33 Z" fill="#e8d9cf"/><rect x="36" y="56" width="2" height="5" fill="#b4614f"/>
</svg>
<svg class="abs" style="left:236.6px;top:816.8px" width="16" height="18" viewBox="0 0 16 18"><g fill="none" stroke="#4f63d8" stroke-width="1.3" stroke-linejoin="round"><rect x="1.1" y="3.9" width="9" height="12.2" rx="1.6"/><path d="M4.2 3.7 V3.2 Q4.2 1.7 5.7 1.7 H11.7 Q13.2 1.7 13.2 3.2 V12.4 Q13.2 13.9 11.9 13.9 H10.3"/></g></svg>
<svg class="abs" style="left:296.0px;top:818.2px" width="16" height="16" viewBox="0 0 16.6 16.6"><g fill="none" stroke="#4f63d8" stroke-width="1.5" stroke-linecap="round" stroke-linejoin="round"><path d="M6.6 2.9 H4 Q1.7 2.9 1.7 5.2 V11.4 Q1.7 13.7 4 13.7 H10.6 Q12.9 13.7 12.9 11.4 V8.2"/><path d="M9.4 1.9 H13.2 V5.7 M13 2.1 L8.8 6.4"/></g></svg>
<div class="abs" style="left:933.2px;top:784.2px;width:152.6px;height:41.4px;border:2px solid #ececee;border-radius:5px;background:#fff"></div>
<div class="abs" style="left:1550px;top:785px;width:110px;height:40px;border-radius:5px;background:#272b36"></div>
<svg class="abs" style="left:50px;top:864px" width="60" height="79" viewBox="0 0 60 79">
<defs><linearGradient id="g4" x1="0" y1="0" x2="0" y2="1"><stop offset="0" stop-color="#a9bf6a"/><stop offset="0.2" stop-color="#cdd2bb"/><stop offset="0.55" stop-color="#b3b19c"/><stop offset="1" stop-color="#a89f84"/></linearGradient></defs>
<rect width="60" height="79" fill="url(#g4)"/>
<rect x="0" y="0" width="60" height="13" fill="#9cbf45"/><rect x="2" y="3" width="36" height="4.4" fill="#d9e8a6"/><rect x="2" y="9" width="39" height="2.2" fill="#c6d78f"/>
<path d="M46 8 Q49 0 57 1 L60 0 V12 Q54 16 48 13 Z" fill="#5fae2e"/><circle cx="54" cy="6" r="3" fill="#8ad04a"/>
<rect x="38" y="20" width="21" height="5" rx="2.4" fill="#8fb94a"/><rect x="38" y="29" width="21" height="5" rx="2.4" fill="#8fb94a"/>
<path d="M2.6 22 Q2.6 18.6 6 18.6 H13 L15 16.6 H32 Q35.4 16.6 35.4 20 V68 Q35.4 71.4 32 71.4 H6 Q2.6 71.4 2.6 68 Z" fill="#fafaf4"/>
<rect x="19" y="18.4" width="10" height="4" rx="1.6" fill="#d9dcd6"/><rect x="5" y="14.6" width="8" height="4.4" rx="1" fill="#dfe5da"/>
<rect x="13" y="33" width="19" height="10" fill="#c5d943"/><rect x="14.6" y="35" width="7" height="4" fill="#8fae2c"/><rect x="24" y="36.6" width="6" height="4" fill="#e7ef9a"/>
<rect x="13" y="43" width="19" height="17" fill="#f1f2ea"/><rect x="14" y="45" width="12" height="2" fill="#e4dc8a"/><rect x="14" y="50" width="16" height="1.6" fill="#c9cbc6"/><rect x="14" y="54" width="16" height="3" fill="#d5d7d2"/>
<rect x="0" y="72" width="60" height="7" fill="#a8a089"/>
<path d="M36 48 Q44 38 55 41 Q60 44 59 52 L58 70 Q50 76 40 71 Z" fill="#f2f3f5"/><path d="M38 52 Q47 45 58 50" stroke="#c9ccd2" stroke-width="1.4" fill="none"/><path d="M38 60 Q48 64 58 58" stroke="#d5d8de" stroke-width="1.2" fill="none"/>
<circle cx="11" cy="72" r="6.4" fill="#8fc43c"/><circle cx="3" cy="71" r="4.6" fill="#7ab52f"/><circle cx="8" cy="76.6" r="3.6" fill="#f4a71c"/><path d="M4 66 Q8 62 13 65 Q9 69 4 66 Z" fill="#2d4b1a"/>
<circle cx="31.6" cy="68.6" r="5" fill="#86c332"/><circle cx="31.6" cy="68.6" r="2.4" fill="none" stroke="#24401a" stroke-width="1"/>
</svg>
<svg class="abs" style="left:234.5px;top:907.7px" width="16" height="18" viewBox="0 0 16 18"><g fill="none" stroke="#4f63d8" stroke-width="1.3" stroke-linejoin="round"><rect x="1.1" y="3.9" width="9" height="12.2" rx="1.6"/><path d="M4.2 3.7 V3.2 Q4.2 1.7 5.7 1.7 H11.7 Q13.2 1.7 13.2 3.2 V12.4 Q13.2 13.9 11.9 13.9 H10.3"/></g></svg>
<svg class="abs" style="left:293.9px;top:909.1px" width="16" height="16" viewBox="0 0 16.6 16.6"><g fill="none" stroke="#4f63d8" stroke-width="1.5" stroke-linecap="round" stroke-linejoin="round"><path d="M6.6 2.9 H4 Q1.7 2.9 1.7 5.2 V11.4 Q1.7 13.7 4 13.7 H10.6 Q12.9 13.7 12.9 11.4 V8.2"/><path d="M9.4 1.9 H13.2 V5.7 M13 2.1 L8.8 6.4"/></g></svg>
<div class="abs" style="left:933.2px;top:883.6px;width:152.6px;height:41.4px;border:2px solid #ececee;border-radius:5px;background:#fff"></div>
<div class="abs" style="left:1550px;top:885px;width:110px;height:39px;border-radius:5px;background:#272b36"></div>
<svg class="abs" style="left:50px;top:964px" width="60" height="80" viewBox="0 0 60 80">
<defs><linearGradient id="g5" x1="0" y1="0" x2="0" y2="1"><stop offset="0" stop-color="#4f95cf"/><stop offset="0.5" stop-color="#86b7e2"/><stop offset="0.85" stop-color="#c8def0"/><stop offset="1" stop-color="#e9f1f8"/></linearGradient></defs>
<rect width="60" height="80" fill="url(#g5)"/>
<text x="2.4" y="6.4" font-family="Liberation Sans,sans-serif" font-size="7" fill="#e9f3fb" textLength="29">Средство</text>
<rect x="2.4" y="8" width="41" height="2.6" fill="#d5e6f5" opacity="0.9"/>
<rect x="10" y="11.6" width="49" height="3.4" fill="#ea8a3f"/>
<path d="M48 4 Q54 -1 60 2 V9 Q53 11 48 4 Z" fill="#5bb04a"/><path d="M50 4 Q55 2 59 5" stroke="#d6efc9" stroke-width="1" fill="none"/>
<path d="M8 22 Q8 18.6 11.4 18.6 H18 L20 16.8 H38 Q41.6 16.8 41.6 20.4 V70 Q41.6 73.4 38 73.4 H11.4 Q8 73.4 8 70 Z" fill="#fbfaf4"/>
<path d="M8 56 H41.6 V70 Q41.6 73.4 38 73.4 H11.4 Q8 73.4 8 70 Z" fill="#f4ecd0"/>
<rect x="24" y="19.6" width="10" height="3.6" rx="1.6" fill="#8fb3dd"/><rect x="10.6" y="16" width="8" height="3.6" rx="1" fill="#dfe6ee"/>
<rect x="17" y="33.6" width="21.6" height="8" fill="#e8893a"/><rect x="29" y="34.6" width="9" height="5" fill="#4ea848"/><rect x="18" y="35.4" width="9" height="1.6" fill="#fbe3c4"/>
<rect x="17" y="41.6" width="21.6" height="15" fill="#f6f3ea"/><rect x="18.6" y="44" width="15" height="4.4" fill="#ec9a5a"/><rect x="18.6" y="50" width="17" height="1.4" fill="#cfcabd"/><rect x="18.6" y="53" width="12" height="1.6" fill="#b9b4a8"/>
<text x="47.6" y="27" font-family="Liberation Sans,sans-serif" font-size="7" fill="#f4f9fd">0+</text>
<ellipse cx="52" cy="34.6" rx="5.6" ry="3.2" fill="#f4f8f2"/><ellipse cx="52" cy="34.6" rx="3.6" ry="1.8" fill="#6fb552"/>
<ellipse cx="52" cy="44" rx="5.6" ry="3" fill="#f6f7f7"/><path d="M48.6 44 H55" stroke="#e9a27c" stroke-width="1"/>
<path d="M0 80 L1 58 L5 70 L8 55 L10 69 L15 58 L14 71 L20 64 L17 76 L24 72 L18 80 Z" fill="#3c9a45"/><path d="M0 80 L3 62 L6 74 L9 60 L11 73 L16 64 L13 80 Z" fill="#62b85a" opacity="0.8"/>
<path d="M42 62 Q46 52 52 56 Q58 54 58 63 Q60 70 56 76 H42 Z" fill="#f3f7fb"/><ellipse cx="47" cy="72" rx="9" ry="3" fill="#dfeaf4"/>
</svg>
<svg class="abs" style="left:234.9px;top:1007.7px" width="16" height="18" viewBox="0 0 16 18"><g fill="none" stroke="#4f63d8" stroke-width="1.3" stroke-linejoin="round"><rect x="1.1" y="3.9" width="9" height="12.2" rx="1.6"/><path d="M4.2 3.7 V3.2 Q4.2 1.7 5.7 1.7 H11.7 Q13.2 1.7 13.2 3.2 V12.4 Q13.2 13.9 11.9 13.9 H10.3"/></g></svg>
<svg class="abs" style="left:294.3px;top:1009.1px" width="16" height="16" viewBox="0 0 16.6 16.6"><g fill="none" stroke="#4f63d8" stroke-width="1.5" stroke-linecap="round" stroke-linejoin="round"><path d="M6.6 2.9 H4 Q1.7 2.9 1.7 5.2 V11.4 Q1.7 13.7 4 13.7 H10.6 Q12.9 13.7 12.9 11.4 V8.2"/><path d="M9.4 1.9 H13.2 V5.7 M13 2.1 L8.8 6.4"/></g></svg>
<div class="abs" style="left:933.2px;top:983.6px;width:152.6px;height:41.4px;border:2px solid #ececee;border-radius:5px;background:#fff"></div>
<div class="abs" style="left:1550px;top:984px;width:110px;height:40px;border-radius:5px;background:#272b36"></div>
<svg class="abs" style="left:50px;top:1064px" width="60" height="80" viewBox="0 0 60 80">
<defs><linearGradient id="g6" x1="0" y1="0" x2="0" y2="1"><stop offset="0" stop-color="#d3d4d6"/><stop offset="0.55" stop-color="#e2e3e4"/><stop offset="0.8" stop-color="#e9e9ea"/><stop offset="1" stop-color="#f2f2f2"/></linearGradient></defs>
<rect width="60" height="80" fill="url(#g6)"/>
<path d="M17.4 24 Q17.4 21.6 20 21.6 H27 L28.6 17 H43 Q45.6 17 45.6 20 V62.6 Q45.6 65.6 43 65.6 H20 Q17.4 65.6 17.4 62.6 Z" fill="#edefe2"/>
<rect x="29.6" y="16" width="14" height="6" rx="2" fill="#f3f4f0"/>
<rect x="19.4" y="16.4" width="7" height="4.4" rx="1" fill="#0b9a5a"/><rect x="18.6" y="20.6" width="9" height="2.4" fill="#e3e8df"/>
<rect x="22" y="34" width="9" height="5" fill="#c83a6a"/><path d="M33 39 Q34 33 39.6 33.6 V39 Z" fill="#c0305e"/><circle cx="36.6" cy="36" r="1.2" fill="#f3d9e2"/>
<rect x="24" y="41" width="15" height="2.2" fill="#8a3a66"/><rect x="24" y="44" width="15" height="1.8" fill="#a9688d"/><rect x="25" y="48" width="1.4" height="9" fill="#c9cbd6"/><rect x="30.6" y="53" width="7" height="1.4" fill="#a596c4"/><rect x="31.6" y="55.6" width="5" height="2" fill="#7f7ea0"/><rect x="24" y="55.6" width="1.2" height="2.4" fill="#555"/>
</svg>
<svg class="abs" style="left:236.9px;top:1115.8px" width="16" height="18" viewBox="0 0 16 18"><g fill="none" stroke="#4f63d8" stroke-width="1.3" stroke-linejoin="round"><rect x="1.1" y="3.9" width="9" height="12.2" rx="1.6"/><path d="M4.2 3.7 V3.2 Q4.2 1.7 5.7 1.7 H11.7 Q13.2 1.7 13.2 3.2 V12.4 Q13.2 13.9 11.9 13.9 H10.3"/></g></svg>
<svg class="abs" style="left:296.3px;top:1117.2px" width="16" height="16" viewBox="0 0 16.6 16.6"><g fill="none" stroke="#4f63d8" stroke-width="1.5" stroke-linecap="round" stroke-linejoin="round"><path d="M6.6 2.9 H4 Q1.7 2.9 1.7 5.2 V11.4 Q1.7 13.7 4 13.7 H10.6 Q12.9 13.7 12.9 11.4 V8.2"/><path d="M9.4 1.9 H13.2 V5.7 M13 2.1 L8.8 6.4"/></g></svg>
<div class="abs" style="left:933.2px;top:1083.2px;width:152.6px;height:41.4px;border:2px solid #ececee;border-radius:5px;background:#fff"></div>
<div class="abs" style="left:1550px;top:1084px;width:110px;height:40px;border-radius:5px;background:#272b36"></div>
<div class="abs" style="left:1462px;top:556px;width:40px;height:609px;background:linear-gradient(90deg,#fbfbfb 0%,#f7f7f7 35%,#f1f1f1 80%,#efefef 92%,#ebebeb 100%);mix-blend-mode:multiply"></div>
<svg class="abs" style="left:1473px;top:569px" width="16" height="23" viewBox="0 0 16 23"><path d="M3.4 2.4 L13 11.4 L3.4 20.6" fill="none" stroke="#50545c" stroke-width="1.6" stroke-linecap="round" stroke-linejoin="round"/></svg>
<div class="abs" style="left:50px;top:1164px;width:60px;height:2px;background:#ee5a66"></div>

<!-- TEXT -->
<div class="abs" style="left:68.6px;top:17.1px;font-size:25px;line-height:31px;color:#476bf0;letter-spacing:1.012px;font-weight:700;-webkit-text-stroke-width:0.3px;"><span style="color:#476bf0">Like</span><span style="color:#ef5261">Stats</span></div>
<div class="abs" style="left:258.9px;top:23.6px;font-size:17px;line-height:21px;color:#343a46;letter-spacing:-0.306px;">Внешняя аналитика</div>
<div class="abs" style="left:504.6px;top:23.6px;font-size:17px;line-height:21px;color:#fff;letter-spacing:-0.105px;-webkit-text-stroke:0.3px #fff;">Внутренняя аналитика</div>
<div class="abs" style="left:774.0px;top:23.6px;font-size:17px;line-height:21px;color:#343a46;letter-spacing:-1.8px;">SEO</div>
<div class="abs" style="left:902.6px;top:23.6px;font-size:17px;line-height:21px;color:#343a46;letter-spacing:-0.1px;">Плагин Chrome</div>
<div class="abs" style="left:1281.8px;top:22.6px;font-size:17px;line-height:21px;color:#5f6369;letter-spacing:-0.267px;">Блог</div>
<div class="abs" style="left:1347.5px;top:22.6px;font-size:17px;line-height:21px;color:#5f6369;letter-spacing:-0.39px;">База знаний</div>
<div class="abs" style="left:1470.5px;top:22.6px;font-size:17px;line-height:21px;color:#5f6369;letter-spacing:-0.377px;">Обратная связь</div>
<div class="abs" style="left:1677.7px;top:23.6px;font-size:17px;line-height:21px;color:#fff;letter-spacing:-0.4px;font-weight:700;">CC</div>
<div class="abs" style="left:32.8px;top:94.6px;font-size:17px;line-height:21px;color:#5f6369;letter-spacing:-0.486px;">Общая аналитика</div>
<div class="abs" style="left:205.5px;top:94.6px;font-size:17px;line-height:21px;color:#5f6369;letter-spacing:-0.358px;">Финансовая аналитика</div>
<div class="abs" style="left:601.8px;top:94.6px;font-size:17px;line-height:21px;color:#5f6369;letter-spacing:-0.129px;">Расчет поставок</div>
<div class="abs" style="left:766.2px;top:94.6px;font-size:17px;line-height:21px;color:#5f6369;letter-spacing:-0.147px;">Расчёт самовыкупов</div>
<div class="abs" style="left:964.3px;top:94.6px;font-size:17px;line-height:21px;color:#5f6369;letter-spacing:-0.383px;">Лента заказов</div>
<div class="abs" style="left:1108.8px;top:94.6px;font-size:17px;line-height:21px;color:#5f6369;letter-spacing:-0.344px;">География заказов</div>
<div class="abs" style="left:1289.5px;top:94.6px;font-size:17px;line-height:21px;color:#5f6369;letter-spacing:-0.184px;">Позиции моих товаров</div>
<div class="abs" style="left:418.8px;top:94.6px;font-size:17px;line-height:21px;color:#476bf0;letter-spacing:-0.113px;">Контроль поставок</div>
<div class="abs" style="left:15.1px;top:162.9px;font-size:32px;line-height:40px;color:#23262f;letter-spacing:-1.15px;font-weight:700;">Контроль поставок</div>
<div class="abs" style="left:34.8px;top:245.6px;font-size:17px;line-height:21px;color:#23262f;letter-spacing:0.212px;">Контроль поставок</div>
<div class="abs" style="left:226.2px;top:245.6px;font-size:17px;line-height:21px;color:#23262f;letter-spacing:0.255px;">Мои поставки</div>
<div class="abs" style="left:375.6px;top:245.6px;font-size:17px;line-height:21px;color:#23262f;letter-spacing:0.232px;">Настройки оповещений</div>
<div class="abs" style="left:34.7px;top:298.0px;font-size:14.5px;line-height:18px;color:#3b3f49;letter-spacing:0.075px;">Бренд</div>
<div class="abs" style="left:223.3px;top:298.0px;font-size:14.5px;line-height:18px;color:#3b3f49;letter-spacing:0.337px;">Категории</div>
<div class="abs" style="left:457.8px;top:298.0px;font-size:14.5px;line-height:18px;color:#3b3f49;letter-spacing:-0.114px;">API ключ</div>
<div class="abs" style="left:49.6px;top:335.0px;font-size:14.5px;line-height:18px;color:#3b3f49;letter-spacing:-0.656px;">Все бренды</div>
<div class="abs" style="left:238.3px;top:335.0px;font-size:14.5px;line-height:18px;color:#3b3f49;letter-spacing:-0.483px;">Все категории</div>
<div class="abs" style="left:472.0px;top:335.0px;font-size:14.5px;line-height:18px;color:#3b3f49;letter-spacing:-0.5px;">ООО &quot;Вектор Плюс&quot;</div>
<div class="abs" style="left:55.1px;top:420.1px;font-size:15.5px;line-height:19px;color:#3b3f49;letter-spacing:0.371px;">Поставка</div>
<div class="abs" style="left:156.5px;top:421.0px;font-size:14.5px;line-height:18px;color:#3b3f49;letter-spacing:-0.5px;">Новая поставка</div>
<div class="abs" style="left:349.7px;top:419.7px;font-size:16px;line-height:20px;color:#fff;letter-spacing:-0.017px;">Рекомендованная поставка</div>
<div class="abs" style="left:70.5px;top:513.4px;font-size:14.5px;line-height:18px;color:#767a82;letter-spacing:-0.326px;">Название или артикул</div>
<div class="abs" style="left:413.7px;top:509.5px;font-size:16px;line-height:20px;color:#23262f;letter-spacing:-0.867px;-webkit-text-stroke:0.15px #23262f;">Цена</div>
<div class="abs" style="left:569.6px;top:509.5px;font-size:16px;line-height:20px;color:#23262f;letter-spacing:-0.4px;-webkit-text-stroke:0.15px #23262f;">Бренд</div>
<div class="abs" style="left:751.2px;top:509.5px;font-size:16px;line-height:20px;color:#23262f;letter-spacing:0.16px;-webkit-text-stroke:0.15px #23262f;">Размер</div>
<div class="abs" style="left:907.2px;top:509.5px;font-size:16px;line-height:20px;color:#23262f;letter-spacing:0.233px;-webkit-text-stroke:0.15px #23262f;">Себестоимость</div>
<div class="abs" style="left:1089.3px;top:509.5px;font-size:16px;line-height:20px;color:#23262f;letter-spacing:0.283px;-webkit-text-stroke:0.15px #23262f;">Остатки</div>
<div class="abs" style="left:1271.8px;top:509.5px;font-size:16px;line-height:20px;color:#23262f;letter-spacing:0.025px;-webkit-text-stroke:0.15px #23262f;">Заказы, ₽</div>
<div class="abs" style="left:1427.6px;top:509.5px;font-size:16px;line-height:20px;color:#23262f;letter-spacing:-0.012px;-webkit-text-stroke:0.15px #23262f;">Заказы, ш</div>
<div class="abs" style="left:120.6px;top:573.1px;font-size:16px;line-height:20px;color:#23262f;letter-spacing:0.072px;">Шампуни для животных / для</div>
<div class="abs" style="left:120.6px;top:588.5px;font-size:16px;line-height:20px;color:#23262f;letter-spacing:0.069px;">всех типов шерсти / 1000 мл</div>
<div class="abs" style="left:121.0px;top:615.1px;font-size:16px;line-height:20px;color:#4f68d9;letter-spacing:0.154px;">Арт.: 48016334</div>
<div class="abs" style="left:269.0px;top:615.1px;font-size:16px;line-height:20px;color:#4f68d9;letter-spacing:-2.9px;">WB</div>
<div class="abs" style="left:468.4px;top:593.5px;font-size:16px;line-height:20px;color:#2d3039;letter-spacing:0.2px;">248 ₽</div>
<div class="abs" style="left:632.6px;top:593.5px;font-size:16px;line-height:20px;color:#2d3039;letter-spacing:0.05px;">Чистосепт</div>
<div class="abs" style="left:982.7px;top:597.0px;font-size:14.5px;line-height:18px;color:#4b4f58;letter-spacing:-0.357px;">100,00 ₽</div>
<div class="abs" style="left:1167.4px;top:593.5px;font-size:16px;line-height:20px;color:#2d3039;letter-spacing:0.72px;">93 шт.</div>
<div class="abs" style="left:1327.0px;top:593.5px;font-size:16px;line-height:20px;color:#2d3039;letter-spacing:0.429px;">63 250 ₽</div>
<div class="abs" style="left:1488.6px;top:593.5px;font-size:16px;line-height:20px;color:#2d3039;letter-spacing:0.1px;width:12.4px;overflow:hidden;">24</div>
<div class="abs" style="left:1564.9px;top:594.5px;font-size:16px;line-height:20px;color:#fff;letter-spacing:-0.078px;">В поставку</div>
<div class="abs" style="left:120.6px;top:673.1px;font-size:16px;line-height:20px;color:#23262f;letter-spacing:0.104px;">Гели для стирки Для цветного</div>
<div class="abs" style="left:120.6px;top:688.5px;font-size:16px;line-height:20px;color:#23262f;letter-spacing:-0.025px;">белья</div>
<div class="abs" style="left:121.0px;top:715.1px;font-size:16px;line-height:20px;color:#4f68d9;letter-spacing:0.177px;">Арт.: 62298662</div>
<div class="abs" style="left:269.3px;top:715.1px;font-size:16px;line-height:20px;color:#4f68d9;letter-spacing:-2.9px;">WB</div>
<div class="abs" style="left:468.4px;top:693.5px;font-size:16px;line-height:20px;color:#2d3039;letter-spacing:0.2px;">652 ₽</div>
<div class="abs" style="left:632.6px;top:693.5px;font-size:16px;line-height:20px;color:#2d3039;letter-spacing:0.05px;">Чистосепт</div>
<div class="abs" style="left:982.7px;top:697.0px;font-size:14.5px;line-height:18px;color:#4b4f58;letter-spacing:-0.357px;">200,00 ₽</div>
<div class="abs" style="left:1164.0px;top:693.5px;font-size:16px;line-height:20px;color:#2d3039;letter-spacing:0.167px;">137 шт.</div>
<div class="abs" style="left:1330.0px;top:693.5px;font-size:16px;line-height:20px;color:#2d3039;letter-spacing:-0.2px;">41 397 ₽</div>
<div class="abs" style="left:1492.4px;top:693.5px;font-size:16px;line-height:20px;color:#2d3039;letter-spacing:0.1px;width:8.6px;overflow:hidden;">6</div>
<div class="abs" style="left:1564.9px;top:694.5px;font-size:16px;line-height:20px;color:#fff;letter-spacing:-0.078px;">В поставку</div>
<div class="abs" style="left:120.6px;top:773.1px;font-size:16px;line-height:20px;color:#23262f;letter-spacing:0.124px;">Гели для стирки для стирки</div>
<div class="abs" style="left:120.6px;top:788.5px;font-size:16px;line-height:20px;color:#23262f;letter-spacing:0.146px;">цветного белья</div>
<div class="abs" style="left:121.0px;top:815.1px;font-size:16px;line-height:20px;color:#4f68d9;letter-spacing:0.131px;">Арт.: 63769873</div>
<div class="abs" style="left:268.7px;top:815.1px;font-size:16px;line-height:20px;color:#4f68d9;letter-spacing:-2.9px;">WB</div>
<div class="abs" style="left:468.4px;top:793.5px;font-size:16px;line-height:20px;color:#2d3039;letter-spacing:0.2px;">652 ₽</div>
<div class="abs" style="left:632.6px;top:793.5px;font-size:16px;line-height:20px;color:#2d3039;letter-spacing:0.05px;">Чистосепт</div>
<div class="abs" style="left:982.7px;top:797.0px;font-size:14.5px;line-height:18px;color:#4b4f58;letter-spacing:-0.357px;">200,00 ₽</div>
<div class="abs" style="left:1164.4px;top:793.5px;font-size:16px;line-height:20px;color:#2d3039;letter-spacing:0.1px;">261 шт.</div>
<div class="abs" style="left:1328.0px;top:793.5px;font-size:16px;line-height:20px;color:#2d3039;letter-spacing:0.086px;">13 699 ₽</div>
<div class="abs" style="left:1494.4px;top:793.5px;font-size:16px;line-height:20px;color:#2d3039;letter-spacing:0.1px;width:6.6px;overflow:hidden;">2</div>
<div class="abs" style="left:1564.9px;top:794.5px;font-size:16px;line-height:20px;color:#fff;letter-spacing:-0.078px;">В поставку</div>
<div class="abs" style="left:120.4px;top:879.5px;font-size:16px;line-height:20px;color:#23262f;letter-spacing:0.133px;">Средство для мытья посуды</div>
<div class="abs" style="left:121.0px;top:905.5px;font-size:16px;line-height:20px;color:#4f68d9;letter-spacing:-0.031px;">Арт.: 73201259</div>
<div class="abs" style="left:266.6px;top:905.5px;font-size:16px;line-height:20px;color:#4f68d9;letter-spacing:-2.9px;">WB</div>
<div class="abs" style="left:468.4px;top:892.9px;font-size:16px;line-height:20px;color:#2d3039;letter-spacing:0.2px;">535 ₽</div>
<div class="abs" style="left:632.6px;top:892.9px;font-size:16px;line-height:20px;color:#2d3039;letter-spacing:0.05px;">Чистосепт</div>
<div class="abs" style="left:982.7px;top:896.4px;font-size:14.5px;line-height:18px;color:#4b4f58;letter-spacing:-0.357px;">210,00 ₽</div>
<div class="abs" style="left:1172.4px;top:892.9px;font-size:16px;line-height:20px;color:#2d3039;letter-spacing:0.525px;">0 шт.</div>
<div class="abs" style="left:1333.0px;top:892.9px;font-size:16px;line-height:20px;color:#2d3039;letter-spacing:0.0px;">1 037 ₽</div>
<div class="abs" style="left:1497.4px;top:892.9px;font-size:16px;line-height:20px;color:#2d3039;letter-spacing:0.1px;width:3.6px;overflow:hidden;">2</div>
<div class="abs" style="left:1564.9px;top:893.9px;font-size:16px;line-height:20px;color:#fff;letter-spacing:-0.078px;">В поставку</div>
<div class="abs" style="left:120.4px;top:979.5px;font-size:16px;line-height:20px;color:#23262f;letter-spacing:0.133px;">Средство для мытья посуды</div>
<div class="abs" style="left:121.0px;top:1005.5px;font-size:16px;line-height:20px;color:#4f68d9;letter-spacing:0.0px;">Арт.: 73201260</div>
<div class="abs" style="left:267.0px;top:1005.5px;font-size:16px;line-height:20px;color:#4f68d9;letter-spacing:-2.9px;">WB</div>
<div class="abs" style="left:468.4px;top:992.9px;font-size:16px;line-height:20px;color:#2d3039;letter-spacing:0.2px;">535 ₽</div>
<div class="abs" style="left:632.6px;top:992.9px;font-size:16px;line-height:20px;color:#2d3039;letter-spacing:0.05px;">Чистосепт</div>
<div class="abs" style="left:982.7px;top:996.4px;font-size:14.5px;line-height:18px;color:#4b4f58;letter-spacing:-0.357px;">260,00 ₽</div>
<div class="abs" style="left:1167.4px;top:992.9px;font-size:16px;line-height:20px;color:#2d3039;letter-spacing:0.72px;">90 шт.</div>
<div class="abs" style="left:1333.0px;top:992.9px;font-size:16px;line-height:20px;color:#2d3039;letter-spacing:0.0px;">1 582 ₽</div>
<div class="abs" style="left:1497.0px;top:992.9px;font-size:16px;line-height:20px;color:#2d3039;letter-spacing:0.1px;width:4.0px;overflow:hidden;">3</div>
<div class="abs" style="left:1564.9px;top:993.9px;font-size:16px;line-height:20px;color:#fff;letter-spacing:-0.078px;">В поставку</div>
<div class="abs" style="left:120.6px;top:1072.1px;font-size:16px;line-height:20px;color:#23262f;letter-spacing:0.124px;">Гели для стирки Для стирки</div>
<div class="abs" style="left:121.6px;top:1087.5px;font-size:16px;line-height:20px;color:#23262f;letter-spacing:0.2px;">детских вещей</div>
<div class="abs" style="left:121.0px;top:1114.1px;font-size:16px;line-height:20px;color:#4f68d9;letter-spacing:0.154px;">Арт.: 90652769</div>
<div class="abs" style="left:269.0px;top:1114.1px;font-size:16px;line-height:20px;color:#4f68d9;letter-spacing:-2.9px;">WB</div>
<div class="abs" style="left:468.4px;top:1092.5px;font-size:16px;line-height:20px;color:#2d3039;letter-spacing:0.2px;">652 ₽</div>
<div class="abs" style="left:632.6px;top:1092.5px;font-size:16px;line-height:20px;color:#2d3039;letter-spacing:0.05px;">Чистосепт</div>
<div class="abs" style="left:982.7px;top:1096.0px;font-size:14.5px;line-height:18px;color:#4b4f58;letter-spacing:-0.357px;">200,00 ₽</div>
<div class="abs" style="left:1164.0px;top:1092.5px;font-size:16px;line-height:20px;color:#2d3039;letter-spacing:0.167px;">160 шт.</div>
<div class="abs" style="left:1333.0px;top:1092.5px;font-size:16px;line-height:20px;color:#2d3039;letter-spacing:0.0px;">6 190 ₽</div>
<div class="abs" style="left:1494.0px;top:1092.5px;font-size:16px;line-height:20px;color:#2d3039;letter-spacing:0.1px;width:7.0px;overflow:hidden;">1</div>
<div class="abs" style="left:1564.9px;top:1093.5px;font-size:16px;line-height:20px;color:#fff;letter-spacing:-0.078px;">В поставку</div>
</body>
</html>
